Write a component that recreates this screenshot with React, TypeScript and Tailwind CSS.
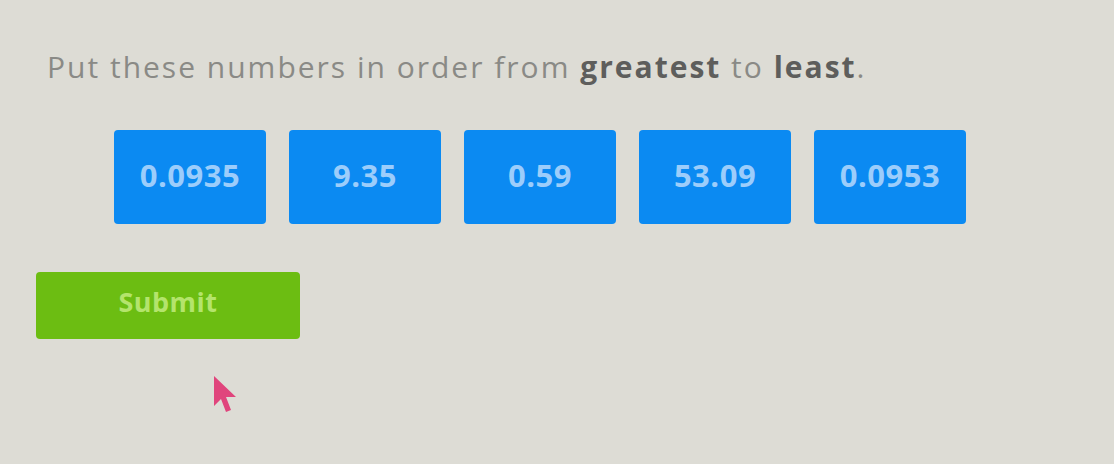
const numbers = ['0.0935', '9.35', '0.59', '53.09', '0.0953'];

export default function App() {
  return (
    <div
      className="relative h-[464px] w-[1114px] overflow-hidden bg-[#dddcd5]"
      style={{ fontFamily: '"Open Sans", "DejaVu Sans", sans-serif' }}
    >
      <div className="flex flex-col pl-[47px] pt-[46px]">
        <p className="text-[30px] leading-[42px] tracking-[2px] text-[#8a8a86]">
          Put these numbers in order from <span className="font-bold text-[#5e5e5c]">greatest</span> to{' '}
          <span className="font-bold text-[#5e5e5c]">least</span>.
        </p>

        <div className="ml-[67px] mt-[42px] flex gap-[23px]">
          {numbers.map((n) => (
            <div
              key={n}
              className="flex h-[94px] w-[152px] items-center justify-center rounded-[4px] bg-[#0b8af2] text-[31px] font-bold tracking-[0.5px] text-[#9ccdfb]"
            >
              <span className="-mt-[4px]">{n}</span>
            </div>
          ))}
        </div>

        <button className="-ml-[11px] mt-[48px] flex h-[67px] w-[264px] items-center justify-center rounded-[4px] bg-[#6cbd12] text-[27px] font-bold tracking-[0.5px] text-[#b4e46c]">
          <span className="-mt-[6px]">Submit</span>
        </button>
      </div>

      <svg className="absolute left-[210px] top-[372px]" width="32" height="44" viewBox="0 0 32 44">
        <path d="M4 4 L4 34 L11 27 L16 40 L21 38 L16 25 L26 25 Z" fill="#e0457c" />
      </svg>
    </div>
  );
}
